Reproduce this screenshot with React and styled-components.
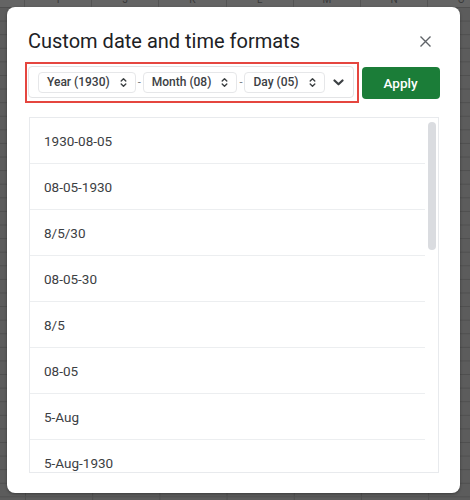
import React from "react";
import styled, { createGlobalStyle } from "styled-components";

const GlobalStyle = createGlobalStyle`
  html, body {
    margin: 0;
    padding: 0;
  }
  body {
    font-family: Roboto, "Liberation Sans", Arial, sans-serif;
  }
`;

const COLUMNS = ["I", "J", "K", "L", "M", "N", "O"];

const FORMATS = [
  "1930-08-05",
  "08-05-1930",
  "8/5/30",
  "08-05-30",
  "8/5",
  "08-05",
  "5-Aug",
  "5-Aug-1930",
];

const CHIPS = ["Year (1930)", "Month (08)", "Day (05)"];

const Sheet = styled.div`
  width: 470px;
  height: 500px;
  overflow: hidden;
  background:
    linear-gradient(to right, #4f4f4f 1px, transparent 1px) 25px 0 / 67.2px 100%,
    linear-gradient(to bottom, #4f4f4f 1px, transparent 1px) 0 7px / 100% 13.6px,
    #5c5c5c;
`;

const ColumnHeader = styled.div`
  display: flex;
  height: 7px;
  overflow: hidden;
  background: #646464;
`;

const Corner = styled.div`
  flex: 0 0 25px;
  border-right: 1px solid #545454;
  box-sizing: border-box;
`;

const ColumnCell = styled.div`
  flex: 0 0 67.2px;
  box-sizing: border-box;
  border-right: 1px solid #545454;
  display: flex;
  align-items: flex-end;
  justify-content: center;
  font-size: 10px;
  line-height: 10px;
  color: #3a3a3a;
  padding-bottom: 2px;
`;

const Dialog = styled.div`
  margin-left: 7px;
  width: 453px;
  height: 486px;
  box-sizing: border-box;
  background: #fff;
  border-radius: 8px;
  box-shadow: 0 1px 3px rgba(0, 0, 0, 0.35);
  padding: 20px 21px 20px 22px;
  display: flex;
  flex-direction: column;
`;

const TitleRow = styled.div`
  display: flex;
  align-items: center;
  justify-content: space-between;
  height: 28px;
`;

const Title = styled.h2`
  margin: 0 0 0 -1px;
  font-family: Roboto, "Liberation Sans", Arial, sans-serif;
  font-weight: 400;
  font-size: 20px;
  line-height: 28px;
  color: #202124;
`;

const CloseButton = styled.button`
  border: 0;
  background: none;
  padding: 0;
  margin-right: 8px;
  width: 12px;
  height: 12px;
  display: flex;
  align-items: center;
  justify-content: center;
  color: #5f6368;
  cursor: pointer;
`;

const Toolbar = styled.div`
  display: flex;
  align-items: center;
  gap: 3px;
  margin-top: 7px;
`;

const Highlight = styled.div`
  margin-left: -4px;
  border: 2.6px solid #e5463f;
  padding: 2px 3px 3px 1px;
  flex: 0 0 333px;
  box-sizing: border-box;
`;

const FormatInput = styled.div`
  height: 32px;
  box-sizing: border-box;
  border: 1px solid #e3e4e6;
  border-radius: 4px;
  display: flex;
  align-items: center;
  padding: 0 9px;
`;

const Chip = styled.div`
  height: 21px;
  box-sizing: border-box;
  border: 1px solid #e6e7e9;
  border-radius: 4px;
  padding: 0 8px 0 8px;
  display: flex;
  align-items: center;
  gap: 10px;
  font-size: 12px;
  font-weight: 500;
  color: #3c4043;
  white-space: nowrap;
`;

const Dash = styled.span`
  font-size: 11px;
  color: #70757a;
  padding: 0 2px;
`;

const MoreButton = styled.div`
  margin-left: 8px;
  display: flex;
  align-items: center;
  color: #3c4043;
`;

const ApplyButton = styled.button`
  flex: 0 0 78px;
  height: 32px;
  border: 0;
  border-radius: 4px;
  background: #1b7d38;
  color: #fff;
  font-family: Roboto, "Liberation Sans", Arial, sans-serif;
  font-size: 13.5px;
  font-weight: 500;
  cursor: pointer;
`;

const List = styled.div`
  margin-top: 14px;
  height: 356px;
  box-sizing: border-box;
  border: 1px solid #e8eaed;
  display: flex;
  overflow: hidden;
`;

const Rows = styled.div`
  flex: 1;
  display: flex;
  flex-direction: column;
`;

const Row = styled.div`
  flex: 0 0 45px;
  display: flex;
  align-items: center;
  padding-left: 14px;
  border-bottom: 1px solid #eceef0;
  font-size: 13.5px;
  color: #3c4043;
`;

const Track = styled.div`
  flex: 0 0 13px;
  display: flex;
  justify-content: center;
  padding-top: 4px;
`;

const Thumb = styled.div`
  width: 8px;
  height: 128px;
  border-radius: 4px;
  background: #dadce0;
`;

const UpDown = () => (
  <svg width="7" height="11" viewBox="0 0 7 11" fill="none" stroke="currentColor" strokeWidth="1.4" strokeLinecap="round" strokeLinejoin="round">
    <path d="M1.2 4 L3.5 1.7 L5.8 4" />
    <path d="M1.2 7 L3.5 9.3 L5.8 7" />
  </svg>
);

export default function App() {
  return (
    <>
      <GlobalStyle />
      <Sheet>
        <ColumnHeader>
          <Corner />
          {COLUMNS.map((c) => (
            <ColumnCell key={c}>{c}</ColumnCell>
          ))}
        </ColumnHeader>
        <Dialog>
          <TitleRow>
            <Title>Custom date and time formats</Title>
            <CloseButton aria-label="Close">
              <svg width="11" height="11" viewBox="0 0 11 11" stroke="currentColor" strokeWidth="1.4">
                <path d="M0.5 0.5 L10.5 10.5 M10.5 0.5 L0.5 10.5" />
              </svg>
            </CloseButton>
          </TitleRow>
          <Toolbar>
            <Highlight>
              <FormatInput>
                {CHIPS.map((c, i) => (
                  <React.Fragment key={c}>
                    {i > 0 && <Dash>-</Dash>}
                    <Chip>
                      {c}
                      <UpDown />
                    </Chip>
                  </React.Fragment>
                ))}
                <MoreButton>
                  <svg width="11" height="7" viewBox="0 0 11 7" fill="none" stroke="currentColor" strokeWidth="2.2" strokeLinecap="round" strokeLinejoin="round">
                    <path d="M1.5 1.5 L5.5 5.3 L9.5 1.5" />
                  </svg>
                </MoreButton>
              </FormatInput>
            </Highlight>
            <ApplyButton>Apply</ApplyButton>
          </Toolbar>
          <List>
            <Rows>
              {FORMATS.map((f) => (
                <Row key={f}>{f}</Row>
              ))}
            </Rows>
            <Track>
              <Thumb />
            </Track>
          </List>
        </Dialog>
      </Sheet>
    </>
  );
}
